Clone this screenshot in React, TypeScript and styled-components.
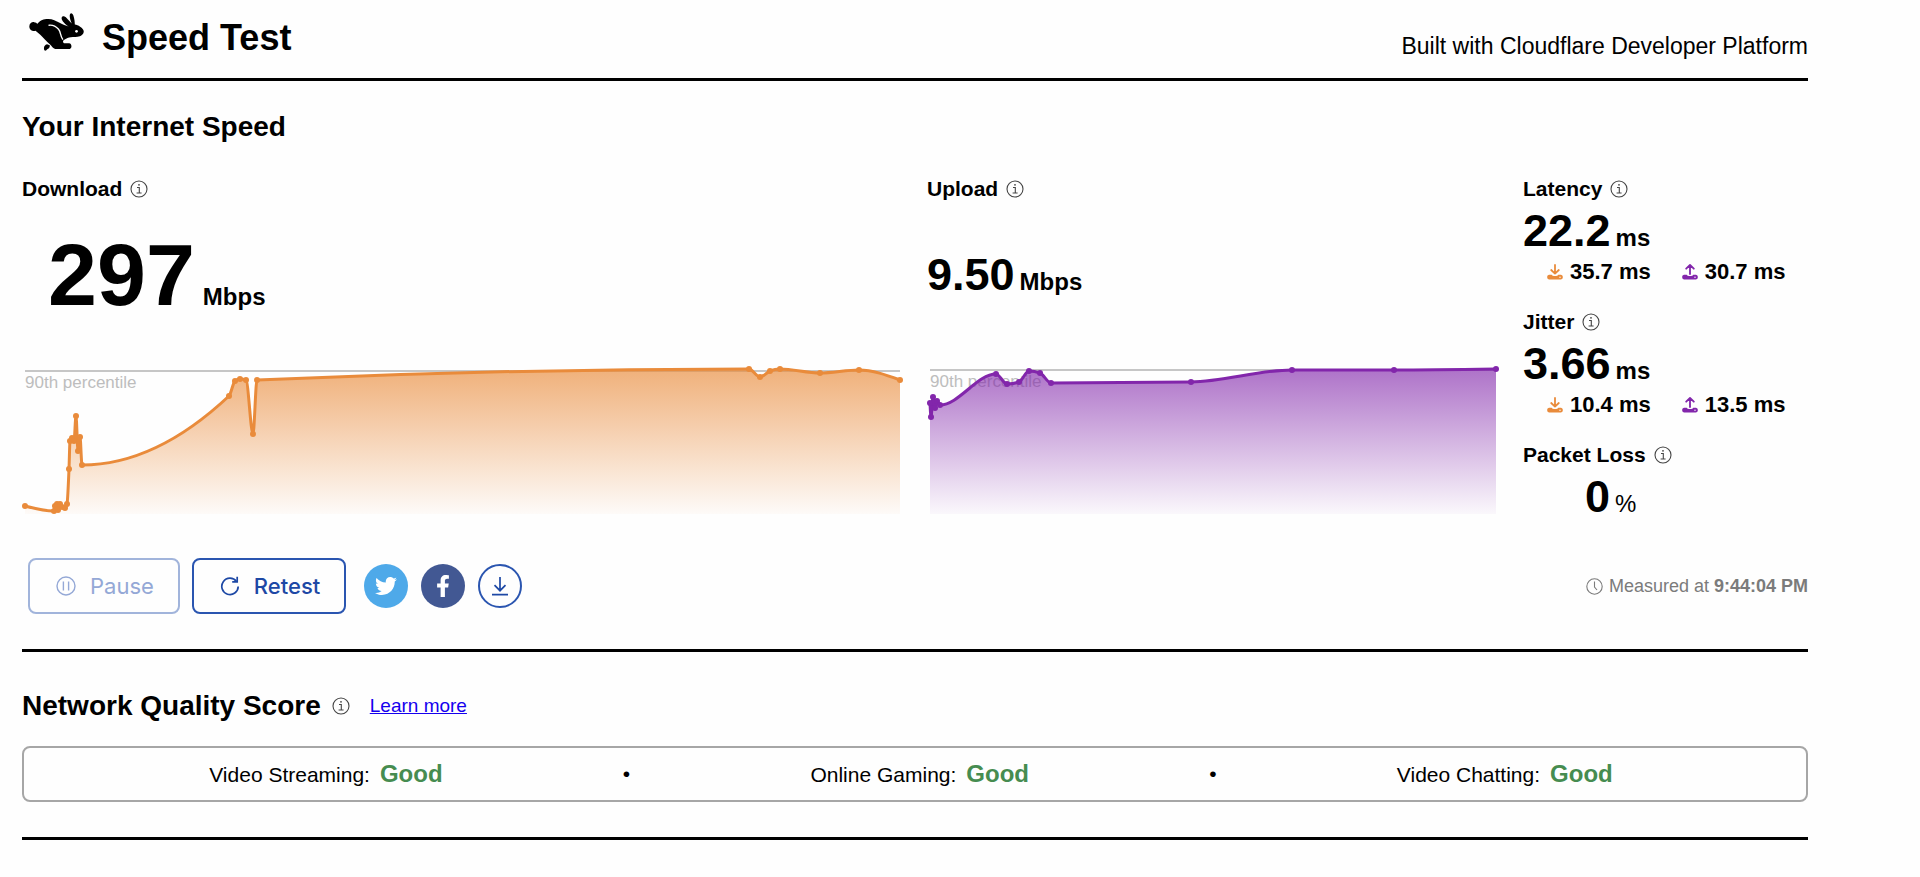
import React from "react";
import styled, { createGlobalStyle } from "styled-components";
import { FaFacebookF, FaTwitter } from "react-icons/fa";

const ORANGE = "#e98b3b";
const PURPLE = "#8226ab";

const GlobalStyle = createGlobalStyle`
  * { box-sizing: border-box; }
  body {
    margin: 0;
    background: #fefefe;
    color: #000;
    font-family: "Liberation Sans", Arial, Helvetica, sans-serif;
  }
  h1, h2, h3, p { margin: 0; }
`;

const Page = styled.main`
  margin: 0 112px 0 22px;
`;

const Header = styled.header`
  display: flex;
  align-items: flex-end;
  justify-content: space-between;
  padding: 13px 0 19px;
  border-bottom: 3px solid #000;
`;

const Brand = styled.div`
  display: flex;
  align-items: flex-start;
  gap: 18px;
  padding-left: 7px;
`;

const BrandTitle = styled.h1`
  padding-top: 4px;
  font-size: 36px;
  line-height: 42px;
`;

const BuiltWith = styled.p`
  font-size: 23px;
  line-height: 26px;
`;

const SpeedSection = styled.section`
  padding: 30px 0 35px;
  border-bottom: 3px solid #000;
`;

const QualitySection = styled.section`
  padding: 38px 0 35px;
  border-bottom: 3px solid #000;
`;

const SectionTitle = styled.h2`
  font-size: 28px;
  line-height: 32px;
`;

const Results = styled.div`
  display: grid;
  grid-template-columns: 878fr 569fr 285px;
  column-gap: 27px;
  margin-top: 34px;
`;

const LabelRow = styled.div`
  display: flex;
  align-items: center;
  gap: 8px;
`;

const Label = styled.h3`
  font-size: 21px;
  line-height: 24px;
`;

const InfoButton = styled.button`
  display: flex;
  padding: 0;
  border: 0;
  background: none;
  color: #444;
  cursor: pointer;
`;

const Speed = styled.div<{ $inset?: boolean }>`
  display: flex;
  align-items: center;
  height: 147px;
  padding-top: 1px;
  padding-left: ${(p) => (p.$inset ? 26 : 0)}px;
`;

const Reading = styled.p`
  display: flex;
  align-items: baseline;
`;

const Value = styled.span<{ $large?: boolean }>`
  min-width: 87px;
  text-align: right;
  font-weight: 700;
  font-size: ${(p) => (p.$large ? 88 : 45)}px;
  line-height: ${(p) => (p.$large ? 88 : 48)}px;
`;

const Unit = styled.span<{ $light?: boolean; $wide?: boolean }>`
  margin-left: ${(p) => (p.$wide ? 8 : 5)}px;
  font-size: 24px;
  font-weight: ${(p) => (p.$light ? 400 : 700)};
`;

const ChartSvg = styled.svg`
  display: block;
  width: 100%;
  height: auto;
  overflow: visible;
`;

const Metrics = styled.div`
  display: flex;
  flex-direction: column;
  gap: 25px;
`;

const MetricReading = styled(Reading)`
  margin-top: 6px;
`;

const LoadedRow = styled.div`
  display: flex;
  gap: 31px;
  margin-top: 4px;
  padding-left: 24px;
`;

const LoadedValue = styled.p`
  display: flex;
  align-items: center;
  gap: 7px;
  font-size: 22px;
  line-height: 26px;
  font-weight: 700;
`;

const Actions = styled.div`
  display: flex;
  align-items: center;
  margin-top: 37px;
  padding-left: 6px;
`;

const ActionButton = styled.button`
  display: flex;
  align-items: center;
  justify-content: center;
  gap: 14px;
  height: 56px;
  margin-right: 12px;
  padding: 0 24px 0 26px;
  border: 2px solid #2a55b0;
  border-radius: 8px;
  background: none;
  color: #1d48a5;
  font-family: Inter, sans-serif;
  font-size: 22px;
  font-weight: 500;
  line-height: 28px;
  cursor: pointer;
  &:disabled {
    border-color: #a1b4db;
    color: #94a8d6;
    font-weight: 400;
    cursor: default;
  }
`;

const ShareGroup = styled.div`
  display: flex;
  align-items: center;
  gap: 13px;
  margin-left: 6px;
`;

const RoundButton = styled.button<{ $fill?: string }>`
  display: flex;
  align-items: center;
  justify-content: center;
  width: 44px;
  height: 44px;
  padding: 0;
  border: ${(p) => (p.$fill ? "0" : "2px solid #2a55b0")};
  border-radius: 50%;
  background: ${(p) => p.$fill ?? "transparent"};
  color: ${(p) => (p.$fill ? "#fff" : "#1d48a5")};
  cursor: pointer;
`;

const Measured = styled.p`
  display: flex;
  align-items: center;
  gap: 6px;
  margin-left: auto;
  color: #7b7b7b;
  font-size: 18px;
  line-height: 22px;
`;

const QualityHeading = styled.div`
  display: flex;
  align-items: center;
  gap: 11px;
`;

const LearnMore = styled.a`
  margin-left: 9px;
  color: #1500ee;
  font-size: 19px;
  line-height: 24px;
`;

const ScoreBox = styled.div`
  display: flex;
  align-items: center;
  justify-content: space-evenly;
  height: 56px;
  margin-top: 24px;
  padding: 0 13px 0 5px;
  border: 2px solid #a6a6a6;
  border-radius: 8px;
  font-size: 21px;
`;

const Score = styled.p`
  display: flex;
  align-items: baseline;
  gap: 10px;
`;

const Grade = styled.strong`
  color: #468c50;
  font-size: 24px;
  line-height: 28px;
`;

const Rabbit = () => (
  <svg width="55" height="38" viewBox="88 42 162 112" fill="#000" aria-hidden="true">
    <path d="M89 84C88 74 95 68 103 69C108 69 111 72 113 74C118 66 127 61 139 60C155 58 167 65 178 71C188 76 196 80 205 82C195 76 184 66 184 57C185 50 192 50 198 56C203 62 210 68 214 73C210 64 206 52 209 45C212 40 217 44 219 50C222 59 223 70 223 76C233 77 246 86 249 94C251 104 242 111 231 112C222 113 212 113 206 114C200 116 194 119 190 122C187 125 188 129 191 131C197 132 204 130 209 132C215 136 214 147 208 148H165C159 147 155 140 150 135C145 130 139 125 134 119C126 110 117 101 107 94C99 97 90 93 89 84Z" />
    <path d="M141 134C134 136 130 143 133 151C136 156 139 151 143 148C148 145 150 141 149 137Z" />
    <path d="M147 78C157 77 168 82 175 90C182 98 180 110 187 119" fill="none" stroke="#fefefe" strokeWidth="4" strokeLinecap="round" />
    <circle cx="228" cy="96" r="4" fill="#fefefe" />
  </svg>
);

const InfoIcon = () => (
  <svg width="18" height="18" viewBox="0 0 18 18" fill="none" stroke="currentColor" strokeWidth="1.1">
    <circle cx="9" cy="9" r="8" />
    <path d="M7 7.5h2.3v5.3M6.6 13h5" />
    <circle cx="9" cy="4.8" r="0.9" fill="currentColor" stroke="none" />
  </svg>
);

const TransferIcon = ({ up }: { up?: boolean }) => {
  const color = up ? PURPLE : ORANGE;
  return (
    <svg width="16" height="16" viewBox="0 0 16 16" fill="none" stroke={color} strokeWidth="1.8" strokeLinecap="round" strokeLinejoin="round" aria-hidden="true">
      <path d={up ? "M8 10V1.2M4.2 4.7L8 1L11.8 4.7" : "M8 1V9.6M4.2 6L8 9.6L11.8 6"} />
      <path d="M2 10.8H4.7Q5.5 12.1 7 12.1H9Q10.5 12.1 11.3 10.8H14Q15.8 10.9 15.9 13.1Q15.9 15.4 14 15.4H2Q0.1 15.4 0.1 13.1Q0.1 10.9 2 10.8Z" fill={color} stroke="none" />
      <circle cx="13" cy="13.3" r="0.7" fill="#fff" stroke="none" />
    </svg>
  );
};

const PauseIcon = () => (
  <svg width="20" height="20" viewBox="0 0 20 20" fill="none" stroke="currentColor" strokeWidth="1.4" aria-hidden="true">
    <circle cx="10" cy="10" r="9" />
    <path d="M7.4 5.5V14.5M12.6 5.5V14.5" />
  </svg>
);

const RetestIcon = () => (
  <svg width="20" height="20" viewBox="0 0 20 20" fill="none" stroke="currentColor" strokeWidth="1.7" aria-hidden="true">
    <path d="M16.5 5.4A8.2 8.2 0 1 0 18.2 10.5" />
    <path d="M17.2 0.8V5.8H12.2" />
  </svg>
);

const SaveIcon = () => (
  <svg width="18" height="20" viewBox="0 0 18 20" fill="none" stroke="currentColor" strokeWidth="1.7" aria-hidden="true">
    <path d="M9 1V14.5M3.5 9.2L9 14.7L14.5 9.2M1 18.6H17" />
  </svg>
);

const ClockIcon = () => (
  <svg width="17" height="17" viewBox="0 0 17 17" fill="none" stroke="currentColor" strokeWidth="1.1" aria-hidden="true">
    <circle cx="8.5" cy="8.5" r="7.7" />
    <path d="M8.5 3.5V9L11 12" />
  </svg>
);

type Point = [number, number];

/* Monotone cubic interpolation, so the line never overshoots a sample. */
const monotonePath = (pts: Point[]) => {
  const n = pts.length;
  const slope = pts.slice(1).map(([x, y], i) => (y - pts[i][1]) / (x - pts[i][0]));
  const tangent = pts.map((_, i) => {
    if (i === 0 || i === n - 1) return 0;
    const [s0, s1] = [slope[i - 1], slope[i]];
    if (s0 * s1 <= 0) return 0;
    const h0 = pts[i][0] - pts[i - 1][0];
    const h1 = pts[i + 1][0] - pts[i][0];
    const p = (s0 * h1 + s1 * h0) / (h0 + h1);
    return 2 * Math.sign(s0) * Math.min(Math.abs(s0), Math.abs(s1), Math.abs(p) / 2);
  });
  tangent[0] = (3 * slope[0] - tangent[1]) / 2;
  tangent[n - 1] = (3 * slope[n - 2] - tangent[n - 2]) / 2;
  return pts.slice(1).reduce((d, [x, y], i) => {
    const [x0, y0] = pts[i];
    const h = (x - x0) / 3;
    return `${d}C${x0 + h},${y0 + h * tangent[i]} ${x - h},${y - h * tangent[i + 1]} ${x},${y}`;
  }, `M${pts[0][0]},${pts[0][1]}`);
};

const downloadSamples: Point[] = [
  [3, 158], [32, 163], [33, 158], [35, 156], [36, 162], [38, 156], [40, 159], [43, 160], [45, 156],
  [47, 121], [48, 93], [50, 90], [52, 93], [54, 68], [56, 103], [58, 89], [60, 117],
  [207, 48], [213, 33], [218, 31], [224, 32], [231, 86], [235, 32],
  [727, 21], [738, 29], [748, 23], [758, 21], [798, 25], [837, 22], [878, 32],
];

const uploadSamples: Point[] = [
  [3, 55], [4, 69], [6, 49], [8, 60], [10, 53], [13, 57], [69, 26], [80, 36], [92, 34], [102, 23],
  [113, 25], [124, 35], [264, 34], [365, 22], [467, 22], [569, 21],
];

interface ChartProps {
  id: string;
  width: number;
  samples: Point[];
  percentile: number;
  color: string;
  opacity: number;
  title: string;
}

const SpeedChart = ({ id, width, samples, percentile, color, opacity, title }: ChartProps) => {
  const line = monotonePath(samples);
  return (
    <ChartSvg viewBox={`0 0 ${width} 166`} role="img" aria-label={title}>
      <defs>
        <linearGradient id={id} gradientUnits="userSpaceOnUse" x1="0" y1="20" x2="0" y2="166">
          <stop offset="0" stopColor={color} stopOpacity={opacity} />
          <stop offset="1" stopColor={color} stopOpacity="0.03" />
        </linearGradient>
      </defs>
      <path d={`M3 ${percentile}H${width}`} stroke="#c6c6c6" strokeWidth="2" />
      <text x="3" y={percentile + 17} fontSize="17" fill="#bdbdbd">90th percentile</text>
      <path d={`${line}V166H3Z`} fill={`url(#${id})`} />
      <path d={line} fill="none" stroke={color} strokeWidth="3" />
      {samples.map(([x, y]) => (
        <circle key={x} cx={x} cy={y} r="3" fill={color} />
      ))}
    </ChartSvg>
  );
};

const Info = ({ about }: { about: string }) => (
  <InfoButton type="button" aria-label={`About ${about}`}>
    <InfoIcon />
  </InfoButton>
);

const Labelled = ({ text }: { text: string }) => (
  <LabelRow>
    <Label>{text}</Label>
    <Info about={text} />
  </LabelRow>
);

interface MetricProps {
  label: string;
  value: string;
  unit: string;
  loaded?: [string, string];
}

const Metric = ({ label, value, unit, loaded }: MetricProps) => (
  <div>
    <Labelled text={label} />
    <MetricReading>
      <Value>{value}</Value>
      <Unit $light={unit === "%"}>{unit}</Unit>
    </MetricReading>
    {loaded && (
      <LoadedRow>
        <LoadedValue><TransferIcon />{loaded[0]}</LoadedValue>
        <LoadedValue><TransferIcon up />{loaded[1]}</LoadedValue>
      </LoadedRow>
    )}
  </div>
);

const QualityScore = ({ name, grade }: { name: string; grade: string }) => (
  <Score>
    {name}:<Grade>{grade}</Grade>
  </Score>
);

export default function App() {
  return (
    <>
      <GlobalStyle />
      <Page>
        <Header>
          <Brand>
            <Rabbit />
            <BrandTitle>Speed Test</BrandTitle>
          </Brand>
          <BuiltWith>Built with Cloudflare Developer Platform</BuiltWith>
        </Header>

        <SpeedSection>
          <SectionTitle>Your Internet Speed</SectionTitle>
          <Results>
            <div>
              <Labelled text="Download" />
              <Speed $inset>
                <Reading>
                  <Value $large>297</Value>
                  <Unit $wide>Mbps</Unit>
                </Reading>
              </Speed>
              <SpeedChart id="download-fill" width={878} samples={downloadSamples} percentile={23} color={ORANGE} opacity={0.68} title="Download speed over time" />
            </div>
            <div>
              <Labelled text="Upload" />
              <Speed>
                <Reading>
                  <Value>9.50</Value>
                  <Unit>Mbps</Unit>
                </Reading>
              </Speed>
              <SpeedChart id="upload-fill" width={569} samples={uploadSamples} percentile={22} color={PURPLE} opacity={0.65} title="Upload speed over time" />
            </div>
            <Metrics>
              <Metric label="Latency" value="22.2" unit="ms" loaded={["35.7 ms", "30.7 ms"]} />
              <Metric label="Jitter" value="3.66" unit="ms" loaded={["10.4 ms", "13.5 ms"]} />
              <Metric label="Packet Loss" value="0" unit="%" />
            </Metrics>
          </Results>

          <Actions>
            <ActionButton type="button" disabled><PauseIcon />Pause</ActionButton>
            <ActionButton type="button"><RetestIcon />Retest</ActionButton>
            <ShareGroup>
              <RoundButton type="button" $fill="#4ea9e9" aria-label="Share on Twitter"><FaTwitter size={22} /></RoundButton>
              <RoundButton type="button" $fill="#425893" aria-label="Share on Facebook"><FaFacebookF size={22} /></RoundButton>
              <RoundButton type="button" aria-label="Download results"><SaveIcon /></RoundButton>
            </ShareGroup>
            <Measured>
              <ClockIcon />
              <span>Measured at <strong>9:44:04 PM</strong></span>
            </Measured>
          </Actions>
        </SpeedSection>

        <QualitySection>
          <QualityHeading>
            <SectionTitle>Network Quality Score</SectionTitle>
            <Info about="Network Quality Score" />
            <LearnMore href="#learn-more">Learn more</LearnMore>
          </QualityHeading>
          <ScoreBox>
            <QualityScore name="Video Streaming" grade="Good" />
            <span>•</span>
            <QualityScore name="Online Gaming" grade="Good" />
            <span>•</span>
            <QualityScore name="Video Chatting" grade="Good" />
          </ScoreBox>
        </QualitySection>
      </Page>
    </>
  );
}
